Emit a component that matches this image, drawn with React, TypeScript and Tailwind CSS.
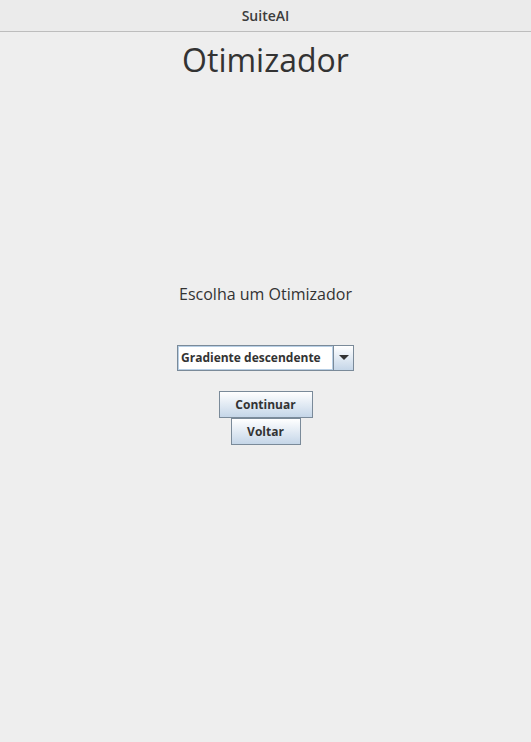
export default function App() {
  return (
    <div className="min-h-[742px] bg-[#eeeeee] flex flex-col" style={{ fontFamily: '"Open Sans", "Noto Sans", sans-serif' }}>
      {/* window title */}
      <header className="h-[32px] bg-[#ebebeb] border-b border-[#bdbdbd] flex items-center justify-center">
        <span className="text-[14px] font-semibold text-[#3c3c3c]">SuiteAI</span>
      </header>

      <main className="flex flex-col items-center">
        <h1 className="mt-[6px] text-[32px] leading-[44px] text-[#333333]">Otimizador</h1>

        <p className="mt-[201px] text-[16px] leading-[22px] text-[#333333]">Escolha um Otimizador</p>

        <div className="mt-[40px] w-[177px] h-[26px] flex border border-[#7a8a99] bg-white">
          <div className="flex-1 flex items-center pl-[2px] border border-[#b8cfe5] text-[12px] font-bold text-[#333333] whitespace-nowrap overflow-hidden">
            Gradiente descendente
          </div>
          <div className="w-[20px] border-l border-[#7a8a99] bg-gradient-to-b from-white to-[#c5d6e8] flex items-center justify-center">
            <svg width="10" height="6" viewBox="0 0 10 6">
              <path d="M0 0 H10 L5 5 Z" fill="#333333" />
            </svg>
          </div>
        </div>

        <div className="mt-[20px] flex flex-col items-center">
          <button className="w-[94px] h-[27px] border border-[#7a8a99] bg-gradient-to-b from-white to-[#c5d6e8] text-[12px] font-bold text-[#333333]">
            Continuar
          </button>
          <button className="w-[70px] h-[27px] border border-[#7a8a99] bg-gradient-to-b from-white to-[#c5d6e8] text-[12px] font-bold text-[#333333]">
            Voltar
          </button>
        </div>
      </main>
    </div>
  );
}
